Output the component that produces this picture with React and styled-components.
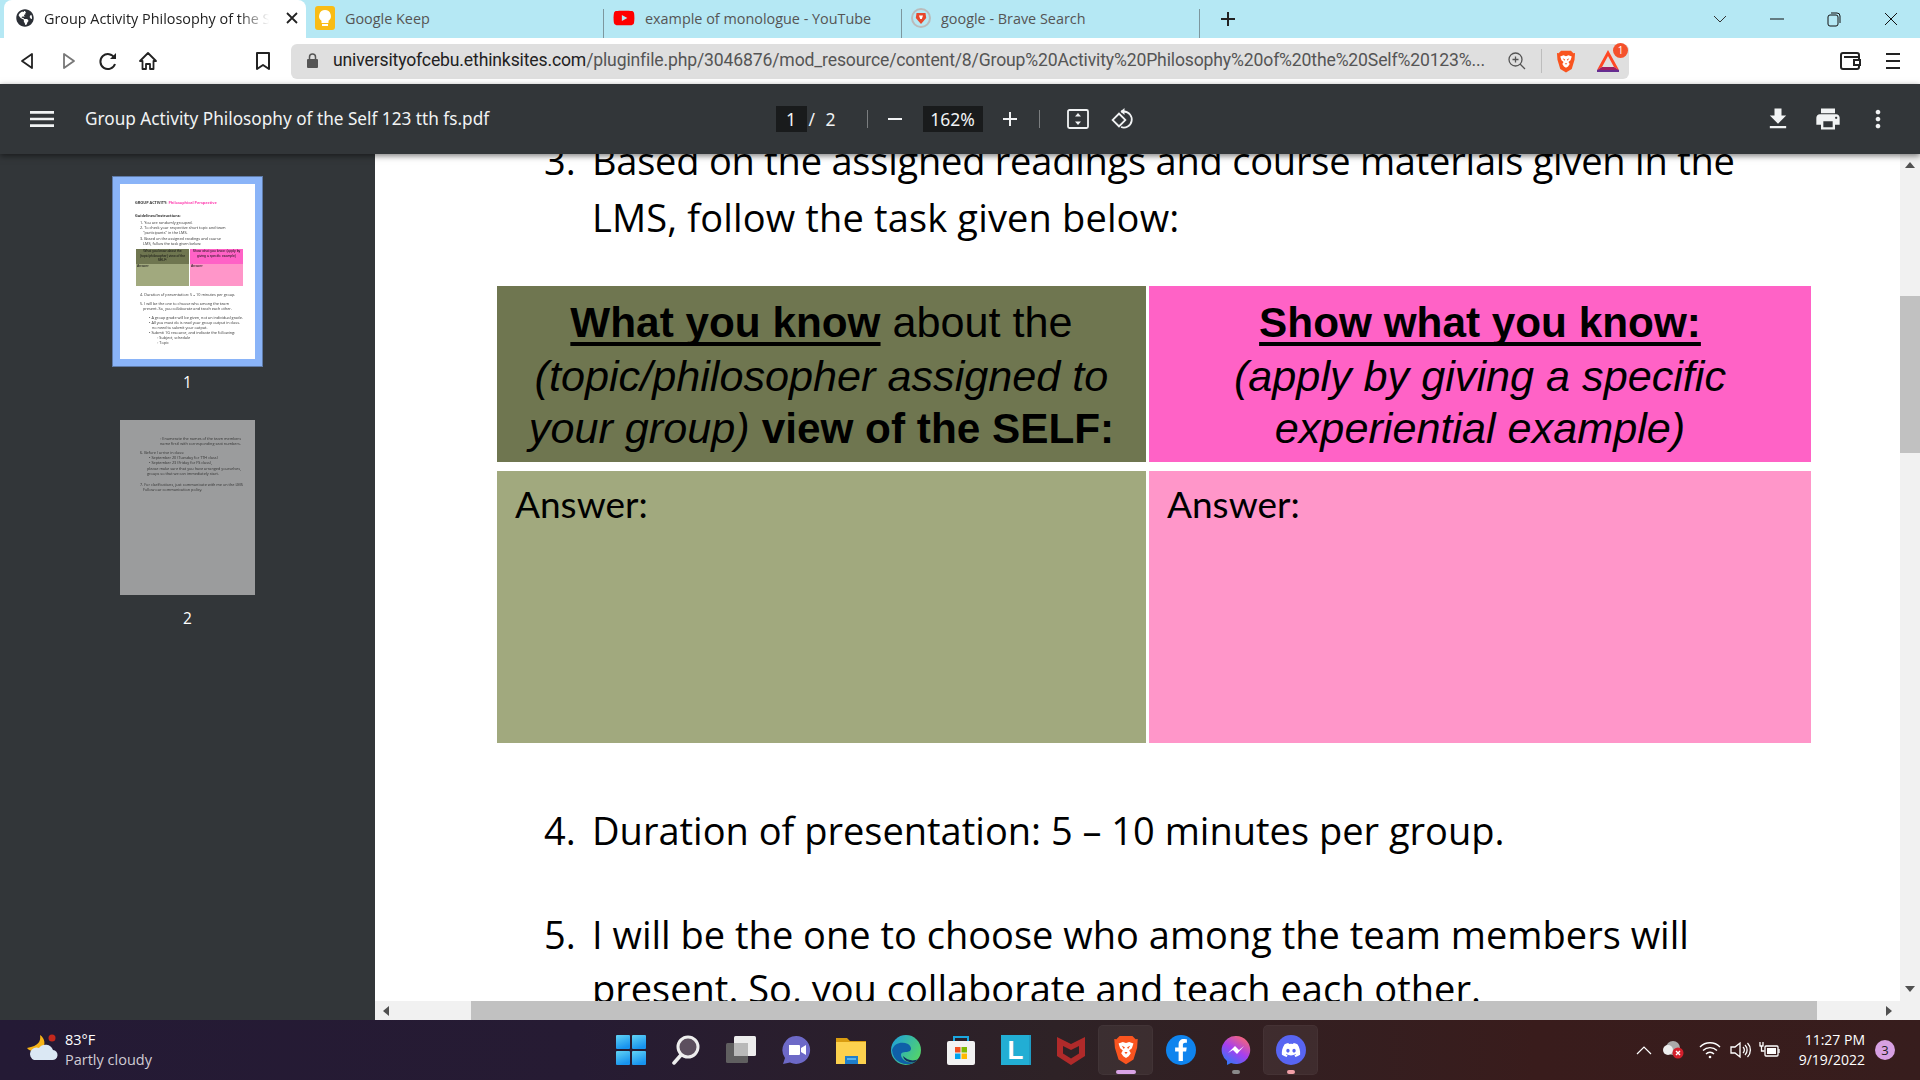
import styled, { createGlobalStyle } from "styled-components";
import { FaDiscord, FaFacebookF, FaGlobeAmericas, FaYoutube } from "react-icons/fa";
import { MdAdd, MdFileDownload, MdMenu, MdMoreVert, MdPrint, MdRemove } from "react-icons/md";

const GlobalStyle = createGlobalStyle`
  html, body { margin: 0; padding: 0; height: 100%; overflow: hidden; }
  * { box-sizing: border-box; }
  body { font-family: "Open Sans", "Liberation Sans", sans-serif; }
`;

const Screen = styled.div`
  width: 1920px;
  height: 1080px;
  display: flex;
  flex-direction: column;
  overflow: hidden;
  background: #fff;
`;

/* browser tabs */
const TabStrip = styled.div`
  height: 38px;
  flex: none;
  background: #b5e8f4;
  display: flex;
  padding-left: 4px;
`;
const Tab = styled.div`
  width: ${(p) => (p.$active ? 302 : 298)}px;
  height: 38px;
  flex: none;
  display: flex;
  align-items: center;
  padding: 0 8px 2px ${(p) => (p.$active ? 12 : 9)}px;
  gap: 10px;
  font-size: 14.4px;
  color: ${(p) => (p.$active ? "#222" : "#555")};
  background: ${(p) => (p.$active ? "#fff" : "transparent")};
  border-radius: ${(p) => (p.$active ? "8px 8px 0 0" : "0")};
  position: relative;
  ${(p) =>
    p.$sep &&
    `&::after {
      content: "";
      position: absolute;
      right: 0;
      top: 9px;
      bottom: 0;
      width: 1px;
      background: #7d979e;
    }`}
`;
const TabTitle = styled.span`
  flex: 1;
  min-width: 0;
  white-space: nowrap;
  overflow: hidden;
  ${(p) =>
    p.$fade &&
    `-webkit-mask-image: linear-gradient(90deg, #000 84%, transparent 97%);
     mask-image: linear-gradient(90deg, #000 84%, transparent 97%);`}
`;
const NewTab = styled.div`
  width: 56px;
  display: flex;
  align-items: center;
  justify-content: center;
  color: #222;
  font-size: 26px;
`;
const WindowControls = styled.div`
  margin-left: auto;
  display: flex;
  align-items: center;
  padding-right: 1px;
`;
const WinButton = styled.div`
  width: 57px;
  height: 38px;
  display: flex;
  align-items: center;
  justify-content: center;
`;

/* address bar row */
const NavBar = styled.div`
  height: 46px;
  flex: none;
  background: #fff;
  display: flex;
  align-items: center;
  padding-left: 18px;
`;
const NavIcon = styled.div`
  width: ${(p) => p.$w || 40}px;
  height: 24px;
  flex: none;
  display: flex;
  align-items: center;
`;
const UrlBar = styled.div`
  width: 1338px;
  height: 35px;
  flex: none;
  background: #dfdfdf;
  border-radius: 6px;
  display: flex;
  align-items: center;
  padding-left: 15px;
  margin-left: 15px;
`;
const UrlText = styled.div`
  width: 1175px;
  margin-left: 14px;
  padding-bottom: 2px;
  font-family: Roboto, "Open Sans", sans-serif;
  font-size: 17.6px;
  letter-spacing: -0.15px;
  white-space: nowrap;
  overflow: hidden;
  color: #555;
  b {
    font-weight: 400;
    color: #222;
  }
`;
const UrlDivider = styled.div`
  width: 1px;
  height: 24px;
  background: #bdbdbd;
  margin: 0 14px 0 15px;
`;
const BatWrap = styled.div`
  position: relative;
  width: 24px;
  height: 24px;
  margin-left: 20px;
`;
const BatBadge = styled.span`
  position: absolute;
  right: -8px;
  top: -6px;
  width: 15px;
  height: 15px;
  border-radius: 50%;
  background: #f4512c;
  color: #fff;
  font-size: 10px;
  line-height: 15px;
  text-align: center;
`;
const NavRight = styled.div`
  display: flex;
  align-items: center;
  gap: 24px;
  margin-left: 210px;
`;

/* pdf viewer toolbar */
const PdfToolbar = styled.div`
  height: 70px;
  flex: none;
  background: #323639;
  color: #f1f3f4;
  display: grid;
  grid-template-columns: 1fr auto 1fr;
  align-items: center;
  box-shadow: 0 2px 6px rgba(0, 0, 0, 0.5);
  position: relative;
  z-index: 2;
`;
const ToolLeft = styled.div`
  display: flex;
  align-items: center;
  padding-left: 26px;
  gap: 27px;
`;
const DocName = styled.div`
  font-family: "Noto Sans", sans-serif;
  font-size: 17.2px;
  white-space: nowrap;
  padding-bottom: 1px;
`;
const ToolCenter = styled.div`
  display: flex;
  align-items: center;
  font-size: 17.5px;
  font-family: "Noto Sans", sans-serif;
  margin-right: 10px;
`;
const NumBox = styled.div`
  height: 26px;
  width: ${(p) => p.$w}px;
  background: #191b1c;
  display: flex;
  align-items: center;
  justify-content: center;
`;
const PageOf = styled.span`
  margin-left: 2px;
  width: 58px;
  word-spacing: 6px;
`;
const ToolSep = styled.div`
  width: 1px;
  height: 18px;
  background: #7b7e80;
`;
const ToolBtn = styled.div`
  width: ${(p) => p.$w || 24}px;
  display: flex;
  justify-content: center;
  margin: ${(p) => p.$m || "0"};
  line-height: 0;
`;
const ToolRight = styled.div`
  display: flex;
  justify-content: flex-end;
  align-items: center;
  gap: 22px;
  padding-right: 28px;
`;

/* viewer body */
const Body = styled.div`
  flex: 1;
  min-height: 0;
  display: flex;
`;
const Sidebar = styled.div`
  width: 375px;
  flex: none;
  background: #323639;
  display: flex;
  flex-direction: column;
  align-items: center;
  padding-top: 22px;
  color: #fff;
  font-size: 15.5px;
`;
const ThumbFrame = styled.div`
  width: 151px;
  height: 191px;
  display: flex;
  align-items: center;
  justify-content: center;
  background: ${(p) => (p.$selected ? "#8ab4f8" : "transparent")};
  box-shadow: ${(p) => (p.$selected ? "inset 0 0 0 1px #5f7ba8" : "none")};
`;
const ThumbPage = styled.div`
  width: 135px;
  height: 175px;
  overflow: hidden;
  background: ${(p) => (p.$dim ? "#9b9c9d" : "#fff")};
  color: #333;
  padding: 16px 8px 0 15px;
  font-family: "Open Sans", sans-serif;
  font-size: 3.8px;
  line-height: 5px;
  filter: blur(0.35px);
`;
const MiniLine = styled.div`
  margin-left: ${(p) => p.$in || 0}px;
  margin-top: ${(p) => p.$top || 0}px;
  white-space: nowrap;
  overflow: hidden;
  font-weight: ${(p) => (p.$bold ? 700 : 400)};
  span {
    color: #ff3fb0;
  }
`;
const MiniTable = styled.div`
  width: 107px;
  margin: 3px 0 0 1px;
  display: grid;
  grid-template-columns: 53px 53px;
  grid-template-rows: 15px 22px;
  column-gap: 1px;
  font-family: "Liberation Sans", sans-serif;
  font-size: 3.4px;
  line-height: 4.6px;
  color: #111;
`;
const MiniCell = styled.div`
  background: ${(p) => p.$bg};
  text-align: ${(p) => (p.$left ? "left" : "center")};
  padding-left: ${(p) => (p.$left ? 1 : 0)}px;
  overflow: hidden;
`;
const ThumbLabel = styled.div`
  margin: 4px 0 ${(p) => p.$mb || 0}px;
  height: 22px;
  line-height: 22px;
`;

const Main = styled.div`
  flex: 1;
  min-width: 0;
  display: flex;
  flex-direction: column;
  background: #fff;
`;
const PageView = styled.div`
  flex: 1;
  min-height: 0;
  overflow: hidden;
  padding-left: 169px;
  color: #000;
  font-family: "Open Sans", sans-serif;
  font-size: 38px;
  line-height: 57px;
`;
const Item = styled.div`
  display: flex;
  margin-top: ${(p) => p.$top}px;
  width: 1250px;
  line-height: ${(p) => p.$lh || 57}px;
`;
const ItemNum = styled.span`
  width: 48px;
  flex: none;
`;
const ItemLine = styled.div`
  letter-spacing: ${(p) => p.$track || 0}px;
  white-space: nowrap;
`;
const AnswerGrid = styled.div`
  margin: 40px 0 0 -47px;
  width: 1315px;
  display: grid;
  grid-template-columns: 649px 662px;
  grid-template-rows: 176px 272px;
  gap: 9px 3px;
`;
const HeadCell = styled.div`
  background: ${(p) => p.$bg};
  font-family: "Liberation Sans", Arial, sans-serif;
  font-size: 43.2px;
  line-height: 52.500px;
  text-align: center;
  color: #000;
  padding-top: 10px;
  white-space: nowrap;
  b {
    font-size: 42.3px;
  }
  u {
    text-underline-offset: 5px;
    text-decoration-thickness: 3.500px;
    text-decoration-skip-ink: none;
  }
`;
const AnswerCell = styled.div`
  background: ${(p) => p.$bg};
  font-family: Lato, "Open Sans", sans-serif;
  font-size: 37px;
  line-height: 46px;
  padding: 10px 0 0 18px;
  color: #000;
`;
const HScroll = styled.div`
  height: 19px;
  flex: none;
  background: #f1f1f1;
  display: flex;
  align-items: center;
  justify-content: space-between;
  position: relative;
  padding: 0 3px 0 3px;
`;
const HThumb = styled.div`
  position: absolute;
  left: 96px;
  width: 1346px;
  top: 0;
  bottom: 0;
  background: #c1c1c1;
`;
const VScroll = styled.div`
  width: 20px;
  flex: none;
  background: #f1f1f1;
  position: relative;
  display: flex;
  flex-direction: column;
  justify-content: space-between;
  align-items: center;
  padding: 3px 0 23px;
`;
const VThumb = styled.div`
  position: absolute;
  top: 142px;
  left: 0;
  right: 0;
  height: 157px;
  background: #c1c1c1;
`;
const Arrow = styled.i`
  width: 0;
  height: 0;
  border: 5px solid transparent;
  ${(p) => `border-${p.$dir}-color: #505050;`}
  ${(p) => `border-${p.$dir}-width: 6px;`}
`;

/* windows taskbar */
const Taskbar = styled.div`
  height: 60px;
  flex: none;
  background: linear-gradient(90deg, #241a35 0%, #261b33 30%, #2e2226 55%, #391c1c 80%, #371d1d 100%);
  color: #fff;
  display: flex;
  align-items: center;
  position: relative;
`;
const Weather = styled.div`
  width: 603px;
  display: flex;
  align-items: center;
  padding-left: 26px;
  gap: 7px;
  font-size: 14.5px;
  line-height: 20px;
  flex: none;
`;
const WeatherDesc = styled.div`
  color: #d0ccd4;
`;
const TaskIcons = styled.div`
  display: flex;
  align-items: center;
`;
const TaskSlot = styled.div`
  width: 55px;
  height: 50px;
  display: flex;
  align-items: center;
  justify-content: center;
  position: relative;
  border-radius: 5px;
  background: ${(p) => (p.$open ? "rgba(255,255,255,0.06)" : "transparent")};
  ${(p) => p.$open && "box-shadow: inset 0 0 0 1px rgba(255,255,255,0.03);"}
`;
const RunDot = styled.span`
  position: absolute;
  bottom: 1px;
  left: 50%;
  transform: translateX(-50%);
  height: 4px;
  border-radius: 2px;
  width: ${(p) => p.$w}px;
  background: ${(p) => p.$c};
`;
const Tray = styled.div`
  margin-left: auto;
  display: flex;
  align-items: center;
  padding-right: 25px;
  height: 100%;
`;
const TrayIcon = styled.div`
  width: ${(p) => p.$w}px;
  display: flex;
  justify-content: center;
  line-height: 0;
`;
const Clock = styled.div`
  text-align: right;
  font-size: 14px;
  line-height: 20px;
  margin-left: 12px;
`;
const NotifBadge = styled.div`
  width: 20px;
  height: 20px;
  margin-left: 10px;
  border-radius: 50%;
  background: #d7a0e2;
  color: #222;
  font-size: 13px;
  line-height: 20px;
  text-align: center;
`;
const LTile = styled.div`
  width: 30px;
  height: 30px;
  background: #22aed4;
  color: #fff;
  font-family: "Liberation Sans", sans-serif;
  font-weight: 700;
  font-size: 26px;
  line-height: 30px;
  text-align: center;
  box-shadow: inset -2px 0 0 #1f9cc4;
`;
const RoundIcon = styled.div`
  width: 30px;
  height: 30px;
  border-radius: 50%;
  background: ${(p) => p.$bg};
  display: flex;
  align-items: center;
  justify-content: center;
  color: #fff;
  overflow: hidden;
`;

const BraveLogo = ({ size = 24 }) => (
  <svg width={size} height={size * 1.15} viewBox="0 0 24 28">
    <path fill="#f9541f" d="M6 1h12l3 3 2-.3-.6 8.300L19 23l-7 4.500L5 23 1.600 12 1 3.700 3 4z" />
    <path fill="#fff" d="M5 8l4-1.500 3 1 3-1L19 8l-1.500 4.500-2.500 2 1.500 2.500-2 3-2.500 1.500L9.500 20l-2-3L9 14.500l-2.500-2z" />
    <path fill="#f9541f" d="M8 10l3 1.500-1 1.500zM16 10l-3 1.500 1 1.500zM10.500 16h3L12 18z" />
  </svg>
);

const BatIcon = () => (
  <svg width="24" height="24" viewBox="0 0 24 24">
    <path fill="#ff4724" d="M12 1 1 21l5-3 6-11 6 11 5 3z" />
    <path fill="#9e1f63" d="M1 21l5-3h12l5 3z" />
    <path fill="#662d91" d="M1 21h22v2H1z" />
  </svg>
);

const FitIcon = () => (
  <svg width="24" height="24" viewBox="0 0 24 24" fill="none" stroke="#f1f3f4" strokeWidth="1.800">
    <rect x="2" y="3" width="20" height="18" rx="1.500" />
    <path fill="#f1f3f4" stroke="none" d="M12 6l3 3.500H9zM12 18l-3-3.500h6z" />
  </svg>
);

const RotateIcon = () => (
  <svg width="24" height="24" viewBox="0 0 24 24" fill="none" stroke="#f1f3f4" strokeWidth="1.800">
    <rect x="3.500" y="8.500" width="9" height="9" transform="rotate(45 8 13)" />
    <path d="M10 4.500h3a8 8 0 1 1-3 15.500" />
    <path fill="#f1f3f4" stroke="none" d="M13.500 1v7l-4-3.500z" />
  </svg>
);

const KeepIcon = () => (
  <svg width="20" height="24" viewBox="0 0 20 24">
    <rect width="20" height="24" rx="3" fill="#f9bc15" />
    <path fill="#fff" d="M10 4a6 6 0 0 0-3.500 10.800V17h7v-2.200A6 6 0 0 0 10 4zM7 18h6v2H7z" />
  </svg>
);

const ShieldFav = () => (
  <svg width="20" height="22" viewBox="0 0 20 22">
    <circle cx="10" cy="11" r="9" fill="none" stroke="#bbb" strokeWidth="2" />
    <path fill="#e8472b" d="M5.500 6h9l.7 5L10 17l-5.200-6z" />
    <path fill="#fff" d="M8 8.500h4L10.800 12h-1.600z" />
  </svg>
);

const WindowsIcon = () => (
  <svg width="30" height="30" viewBox="0 0 30 30">
    <defs>
      <linearGradient id="win" x1="0" y1="0" x2="0.4" y2="1">
        <stop offset="0" stopColor="#62d4f5" />
        <stop offset="1" stopColor="#1793ee" />
      </linearGradient>
    </defs>
    <rect x="0" y="0" width="14" height="14" rx="1" fill="url(#win)" />
    <rect x="16" y="0" width="14" height="14" rx="1" fill="url(#win)" />
    <rect x="0" y="16" width="14" height="14" rx="1" fill="url(#win)" />
    <rect x="16" y="16" width="14" height="14" rx="1" fill="url(#win)" />
  </svg>
);

const SearchIcon = () => (
  <svg width="30" height="30" viewBox="0 0 30 30">
    <circle cx="17" cy="12" r="10" fill="#5c4f5e" stroke="#eee" strokeWidth="3" />
    <path d="M10 20l-7 8" stroke="#eee" strokeWidth="3.500" strokeLinecap="round" />
  </svg>
);

const TaskViewIcon = () => (
  <svg width="30" height="30" viewBox="0 0 30 30">
    <rect x="0" y="8" width="22" height="20" rx="1.500" fill="#605f60" />
    <rect x="8" y="1" width="22" height="20" rx="1.500" fill="#ededed" />
    <rect x="8" y="8" width="14" height="13" fill="#b9b9b9" />
  </svg>
);

const ChatIcon = () => (
  <svg width="30" height="30" viewBox="0 0 30 30">
    <path fill="#6d69c7" d="M15 1a14 14 0 1 1-6 26.600L2 29l2-6A14 14 0 0 1 15 1z" />
    <path fill="#fff" d="M8 10h10a1 1 0 0 1 1 1v8a1 1 0 0 1-1 1H8zM20 13l5-3v10l-5-3z" />
  </svg>
);

const FolderIcon = () => (
  <svg width="30" height="30" viewBox="0 0 30 30">
    <path fill="#d99c10" d="M0 3h11l3 3h16v6H0z" />
    <path fill="#fcd14e" d="M0 7h30v22H0z" />
    <path fill="#1f7fcb" d="M9 21h13v8H9z" />
    <path fill="#58b4ee" d="M11 23h9v2h-9z" />
  </svg>
);

const EdgeIcon = () => (
  <svg width="30" height="30" viewBox="0 0 30 30">
    <defs>
      <linearGradient id="edge" x1="0" y1="0" x2="1" y2="0.6">
        <stop offset="0" stopColor="#1b9de2" />
        <stop offset="1" stopColor="#52d36c" />
      </linearGradient>
    </defs>
    <circle cx="15" cy="15" r="15" fill="url(#edge)" />
    <path fill="#0f5fa8" d="M1 15c2-7 10-9 16-6 3 2 4 5 2 7-4 2-9 0-9 4s6 9 14 7a15 15 0 0 1-23-12z" />
    <path fill="#112f5f" d="M12 21c1 5 6 7 12 6l3-3c-5 3-11 1-15-3z" />
  </svg>
);

const StoreIcon = () => (
  <svg width="30" height="30" viewBox="0 0 30 30">
    <path d="M8 7V2h14v5" fill="none" stroke="#1ba7e0" strokeWidth="2" />
    <rect x="1" y="6" width="28" height="24" rx="2" fill="#f2f2f2" />
    <rect x="9" y="12" width="5.500" height="5.500" fill="#f25022" />
    <rect x="15.500" y="12" width="5.500" height="5.500" fill="#7fba00" />
    <rect x="9" y="18.500" width="5.500" height="5.500" fill="#00a4ef" />
    <rect x="15.500" y="18.500" width="5.500" height="5.500" fill="#ffb900" />
  </svg>
);

const McAfeeIcon = () => (
  <svg width="28" height="30" viewBox="0 0 28 30">
    <path fill="#b02a2a" d="M0 2l14 7 14-7v19l-14 9-14-9zM6 11v7.500l8 5 8-5V11l-8 4z" fillRule="evenodd" />
  </svg>
);

const MessengerIcon = () => (
  <svg width="30" height="30" viewBox="0 0 30 30">
    <defs>
      <linearGradient id="msg" x1="0.2" y1="1" x2="0.8" y2="0">
        <stop offset="0" stopColor="#2a7bf6" />
        <stop offset="0.5" stopColor="#a63ef0" />
        <stop offset="1" stopColor="#fb6a6f" />
      </linearGradient>
    </defs>
    <path fill="url(#msg)" d="M15 1a14 14 0 1 1-5 27l-4 2v-4A14 14 0 0 1 15 1z" />
    <path fill="#fff" d="M7 18l7-7 4 4 5-4-7 8-4-4z" />
  </svg>
);

const WeatherIcon = () => (
  <svg width="32" height="32" viewBox="0 0 32 32">
    <path fill="#f6b417" d="M14 1c1 6-1 11-13 13 3 4 10 5 15 1 4-4 3-11-2-14z" />
    <path fill="#dbe8f4" d="M8 26h18a5 5 0 0 0 1-10 8 8 0 0 0-14-2 6 6 0 0 0-5 12z" />
    <circle cx="26" cy="4" r="3.500" fill="#c4281c" />
  </svg>
);

const Wifi = () => (
  <svg width="22" height="18" viewBox="0 0 22 18" fill="none" stroke="#fff" strokeWidth="1.400">
    <path d="M1 6a14 14 0 0 1 20 0M4 9.500a10 10 0 0 1 14 0M7 13a5.500 5.500 0 0 1 8 0" />
    <circle cx="11" cy="16" r="1.300" fill="#fff" stroke="none" />
  </svg>
);

const Speaker = () => (
  <svg width="22" height="18" viewBox="0 0 22 18" fill="none" stroke="#fff" strokeWidth="1.300">
    <path d="M1 6h4l5-4v14l-5-4H1zM13 6a4 4 0 0 1 0 6M15 4a7 7 0 0 1 0 10M17.500 2a10 10 0 0 1 0 14" />
  </svg>
);

const Battery = () => (
  <svg width="22" height="18" viewBox="0 0 22 18" fill="none" stroke="#fff" strokeWidth="1.300">
    <rect x="6" y="5" width="13" height="10" rx="1" />
    <rect x="8" y="7" width="9" height="6" fill="#fff" stroke="none" />
    <path d="M20 8v4M1 1v4M4 1v4M0.500 5h4M2.500 5v5h3" />
  </svg>
);

const CloudOff = () => (
  <svg width="22" height="20" viewBox="0 0 22 20">
    <circle cx="11" cy="8" r="7" fill="#aaa" />
    <circle cx="6" cy="10" r="5" fill="#eee" />
    <circle cx="16" cy="13" r="5.500" fill="#d4202c" />
    <path d="M14 11l4 4m0-4l-4 4" stroke="#fff" strokeWidth="1.400" />
  </svg>
);

const stroke = { fill: "none", stroke: "#222", strokeWidth: 1.8, strokeLinejoin: "round" };

const App = () => {
  return (
    <Screen>
      <GlobalStyle />
      <TabStrip>
        <Tab $active>
          <FaGlobeAmericas size={18} color="#2b2f36" />
          <TabTitle $fade>Group Activity Philosophy of the Self 123 tth fs.pdf</TabTitle>
          <svg width="12" height="12" viewBox="0 0 12 12">
            <path d="M1 1l10 10M11 1L1 11" stroke="#222" strokeWidth="1.800" />
          </svg>
        </Tab>
        <Tab $sep>
          <KeepIcon />
          <TabTitle>Google Keep</TabTitle>
        </Tab>
        <Tab $sep>
          <FaYoutube size={22} color="#f00" />
          <TabTitle>example of monologue - YouTube</TabTitle>
        </Tab>
        <Tab $sep>
          <ShieldFav />
          <TabTitle>google - Brave Search</TabTitle>
        </Tab>
        <NewTab>
          <MdAdd size={24} />
        </NewTab>
        <WindowControls>
          <WinButton>
            <svg width="14" height="8" viewBox="0 0 14 8">
              <path d="M1 1l6 6 6-6" fill="none" stroke="#333" strokeWidth="1" />
            </svg>
          </WinButton>
          <WinButton>
            <svg width="14" height="2" viewBox="0 0 14 2">
              <path d="M0 1h14" stroke="#111" strokeWidth="1" />
            </svg>
          </WinButton>
          <WinButton>
            <svg width="14" height="15" viewBox="0 0 14 15">
              <rect x="1" y="3" width="10" height="11" rx="2" fill="none" stroke="#111" />
              <path d="M4 1h6a3 3 0 0 1 3 3v7" fill="none" stroke="#111" />
            </svg>
          </WinButton>
          <WinButton>
            <svg width="14" height="14" viewBox="0 0 14 14">
              <path d="M1 1l12 12M13 1L1 13" stroke="#111" strokeWidth="1" />
            </svg>
          </WinButton>
        </WindowControls>
      </TabStrip>

      <NavBar>
        <NavIcon>
          <svg width="20" height="20" viewBox="0 0 20 20">
            <path d="M14 3v14L4 10z" {...stroke} />
          </svg>
        </NavIcon>
        <NavIcon>
          <svg width="20" height="20" viewBox="0 0 20 20">
            <path d="M6 3v14l10-7z" {...stroke} stroke="#777" />
          </svg>
        </NavIcon>
        <NavIcon>
          <svg width="20" height="20" viewBox="0 0 20 20">
            <path d="M16.500 7A7.500 7.500 0 1 0 17 13" {...stroke} strokeWidth="2" />
            <path d="M18 2v6h-6z" fill="#222" />
          </svg>
        </NavIcon>
        <NavIcon $w={116}>
          <svg width="20" height="20" viewBox="0 0 20 20">
            <path d="M2 10l8-8 8 8h-2.500v8H12v-5H8v5H4.500v-8z" {...stroke} />
          </svg>
        </NavIcon>
        <NavIcon $w={22}>
          <svg width="18" height="20" viewBox="0 0 18 20">
            <path d="M3 2h12v16l-6-4-6 4z" {...stroke} strokeWidth="2" />
          </svg>
        </NavIcon>
        <UrlBar>
          <svg width="13" height="16" viewBox="0 0 13 16">
            <rect x="1" y="6" width="11" height="9" rx="1" fill="#555" />
            <path d="M3.500 6V4a3 3 0 0 1 6 0v2" fill="none" stroke="#555" strokeWidth="1.500" />
          </svg>
          <UrlText>
            <b>universityofcebu.ethinksites.com</b>
            /pluginfile.php/3046876/mod_resource/content/8/Group%20Activity%20Philosophy%20of%20the%20Self%20123%...
          </UrlText>
          <svg width="18" height="18" viewBox="0 0 18 18" fill="none" stroke="#555" strokeWidth="1.300">
            <circle cx="7.500" cy="7.500" r="6.500" />
            <path d="M12 12l5 5M7.500 4.500v6M4.500 7.500h6" />
          </svg>
          <UrlDivider />
          <BraveLogo size={20} />
          <BatWrap>
            <BatIcon />
            <BatBadge>1</BatBadge>
          </BatWrap>
        </UrlBar>
        <NavRight>
          <svg width="22" height="20" viewBox="0 0 22 20" fill="none" stroke="#222" strokeWidth="2">
            <path d="M20 6V4a2 2 0 0 0-2-2H4a2 2 0 0 0-2 2v12a2 2 0 0 0 2 2h14a2 2 0 0 0 2-2V6H5" />
            <path d="M21 9h-6v5h6z" fill="#fff" />
          </svg>
          <svg width="16" height="18" viewBox="0 0 16 18">
            <path d="M1 2h14M1 9h14M1 16h14" stroke="#222" strokeWidth="1.800" />
          </svg>
        </NavRight>
      </NavBar>

      <PdfToolbar>
        <ToolLeft>
          <MdMenu size={32} />
          <DocName>Group Activity Philosophy of the Self 123 tth fs.pdf</DocName>
        </ToolLeft>
        <ToolCenter>
          <NumBox $w={31}>1</NumBox>
          <PageOf>/ 2</PageOf>
          <ToolSep />
          <ToolBtn $m="0 16px 0 15px">
            <MdRemove size={24} />
          </ToolBtn>
          <NumBox $w={60}>162%</NumBox>
          <ToolBtn $m="0 17px 0 15px">
            <MdAdd size={26} />
          </ToolBtn>
          <ToolSep />
          <ToolBtn $m="0 21px 0 26px">
            <FitIcon />
          </ToolBtn>
          <RotateIcon />
        </ToolCenter>
        <ToolRight>
          <MdFileDownload size={28} />
          <MdPrint size={28} />
          <MdMoreVert size={28} />
        </ToolRight>
      </PdfToolbar>

      <Body>
        <Sidebar>
          <ThumbFrame $selected>
            <ThumbPage>
              <MiniLine $bold>
                GROUP ACTIVITY: <span>Philosophical Perspective</span>
              </MiniLine>
              <MiniLine $top={8} $bold>Guidelines/Instructions:</MiniLine>
              <MiniLine $top={2} $in={5}>1. You are randomly grouped.</MiniLine>
              <MiniLine $in={5}>2. To check your respective short topic and team</MiniLine>
              <MiniLine $in={8}>"participants" in the LMS.</MiniLine>
              <MiniLine $top={1} $in={5}>3. Based on the assigned readings and course</MiniLine>
              <MiniLine $in={8}>LMS, follow the task given below:</MiniLine>
              <MiniTable>
                <MiniCell $bg="#6f7650">What you know about the (topic/philosopher) view of the SELF:</MiniCell>
                <MiniCell $bg="#ff62c6">Show what you know: (apply by giving a specific example)</MiniCell>
                <MiniCell $bg="#a1a97e" $left>Answer:</MiniCell>
                <MiniCell $bg="#ff96c9" $left>Answer:</MiniCell>
              </MiniTable>
              <MiniLine $top={6} $in={5}>4. Duration of presentation: 5 – 10 minutes per group.</MiniLine>
              <MiniLine $top={4} $in={5}>5. I will be the one to choose who among the team</MiniLine>
              <MiniLine $in={8}>present. So, you collaborate and teach each other.</MiniLine>
              <MiniLine $top={4} $in={14}>• A group grade will be given, not an individual grade.</MiniLine>
              <MiniLine $in={14}>• All you must do is read your group output in class.</MiniLine>
              <MiniLine $in={17}>no need to submit your output.</MiniLine>
              <MiniLine $in={14}>• Submit 1G resource, and indicate the following:</MiniLine>
              <MiniLine $in={22}>◦ Subject, schedule</MiniLine>
              <MiniLine $in={22}>◦ Topic</MiniLine>
            </ThumbPage>
          </ThumbFrame>
          <ThumbLabel $mb={19}>1</ThumbLabel>
          <ThumbFrame>
            <ThumbPage $dim>
              <MiniLine $in={25}>◦ Enumerate the names of the team members</MiniLine>
              <MiniLine $in={25}>name first) with corresponding seat numbers.</MiniLine>
              <MiniLine $top={4} $in={5}>6. Before I arrive in class:</MiniLine>
              <MiniLine $in={14}>• September 20 (Tuesday for TTH class)</MiniLine>
              <MiniLine $in={14}>• September 23 (Friday for FS class),</MiniLine>
              <MiniLine $in={12} $top={1}>please make sure that you have arranged yourselves,</MiniLine>
              <MiniLine $in={12}>groups so that we can immediately start.</MiniLine>
              <MiniLine $top={6} $in={5}>7. For clarifications, just communicate with me on the LMS</MiniLine>
              <MiniLine $in={8}>Follow our communication policy.</MiniLine>
            </ThumbPage>
          </ThumbFrame>
          <ThumbLabel>2</ThumbLabel>
        </Sidebar>

        <Main>
          <PageView>
            <Item $top={-22}>
              <ItemNum>3.</ItemNum>
              <div>
                <ItemLine $track={-0.22}>Based on the assigned readings and course materials given in the</ItemLine>
                <ItemLine $track={0.15}>LMS, follow the task given below:</ItemLine>
              </div>
            </Item>
            <AnswerGrid>
              <HeadCell $bg="#6f7650">
                <u><b>What you know</b></u> about the
                <br />
                <i>(topic/philosopher assigned to</i>
                <br />
                <i>your group)</i> <b>view of the SELF:</b>
              </HeadCell>
              <HeadCell $bg="#ff62c6">
                <u><b>Show what you know:</b></u>
                <br />
                <i>(apply by giving a specific</i>
                <br />
                <i>experiential example)</i>
              </HeadCell>
              <AnswerCell $bg="#a1a97e">Answer:</AnswerCell>
              <AnswerCell $bg="#ff96c9">Answer:</AnswerCell>
            </AnswerGrid>
            <Item $top={59}>
              <ItemNum>4.</ItemNum>
              <ItemLine>Duration of presentation: 5 – 10 minutes per group.</ItemLine>
            </Item>
            <Item $top={48} $lh={54}>
              <ItemNum>5.</ItemNum>
              <div>
                <ItemLine>I will be the one to choose who among the team members will</ItemLine>
                <ItemLine>present. So, you collaborate and teach each other.</ItemLine>
              </div>
            </Item>
          </PageView>
          <HScroll>
            <Arrow $dir="right" />
            <HThumb />
            <Arrow $dir="left" />
          </HScroll>
        </Main>
        <VScroll>
          <Arrow $dir="bottom" />
          <VThumb />
          <Arrow $dir="top" />
        </VScroll>
      </Body>

      <Taskbar>
        <Weather>
          <WeatherIcon />
          <div>
            <div>83°F</div>
            <WeatherDesc>Partly cloudy</WeatherDesc>
          </div>
        </Weather>
        <TaskIcons>
          <TaskSlot><WindowsIcon /></TaskSlot>
          <TaskSlot><SearchIcon /></TaskSlot>
          <TaskSlot><TaskViewIcon /></TaskSlot>
          <TaskSlot><ChatIcon /></TaskSlot>
          <TaskSlot><FolderIcon /></TaskSlot>
          <TaskSlot><EdgeIcon /></TaskSlot>
          <TaskSlot><StoreIcon /></TaskSlot>
          <TaskSlot><LTile>L</LTile></TaskSlot>
          <TaskSlot><McAfeeIcon /></TaskSlot>
          <TaskSlot $open>
            <BraveLogo size={26} />
            <RunDot $w={20} $c="#d9a3e6" />
          </TaskSlot>
          <TaskSlot>
            <RoundIcon $bg="#0f84ee"><FaFacebookF size={22} /></RoundIcon>
          </TaskSlot>
          <TaskSlot>
            <MessengerIcon />
            <RunDot $w={8} $c="#8a8a8a" />
          </TaskSlot>
          <TaskSlot $open>
            <RoundIcon $bg="#5865f2"><FaDiscord size={20} /></RoundIcon>
            <RunDot $w={8} $c="#f2a0a8" />
          </TaskSlot>
        </TaskIcons>
        <Tray>
          <TrayIcon $w={22}>
            <svg width="16" height="9" viewBox="0 0 16 9">
              <path d="M1 8l7-7 7 7" fill="none" stroke="#fff" strokeWidth="1.200" />
            </svg>
          </TrayIcon>
          <TrayIcon $w={36}><CloudOff /></TrayIcon>
          <TrayIcon $w={38}><Wifi /></TrayIcon>
          <TrayIcon $w={24}><Speaker /></TrayIcon>
          <TrayIcon $w={34}><Battery /></TrayIcon>
          <Clock>
            <div>11:27 PM</div>
            <div>9/19/2022</div>
          </Clock>
          <NotifBadge>3</NotifBadge>
        </Tray>
      </Taskbar>
    </Screen>
  );
};

export default App;
